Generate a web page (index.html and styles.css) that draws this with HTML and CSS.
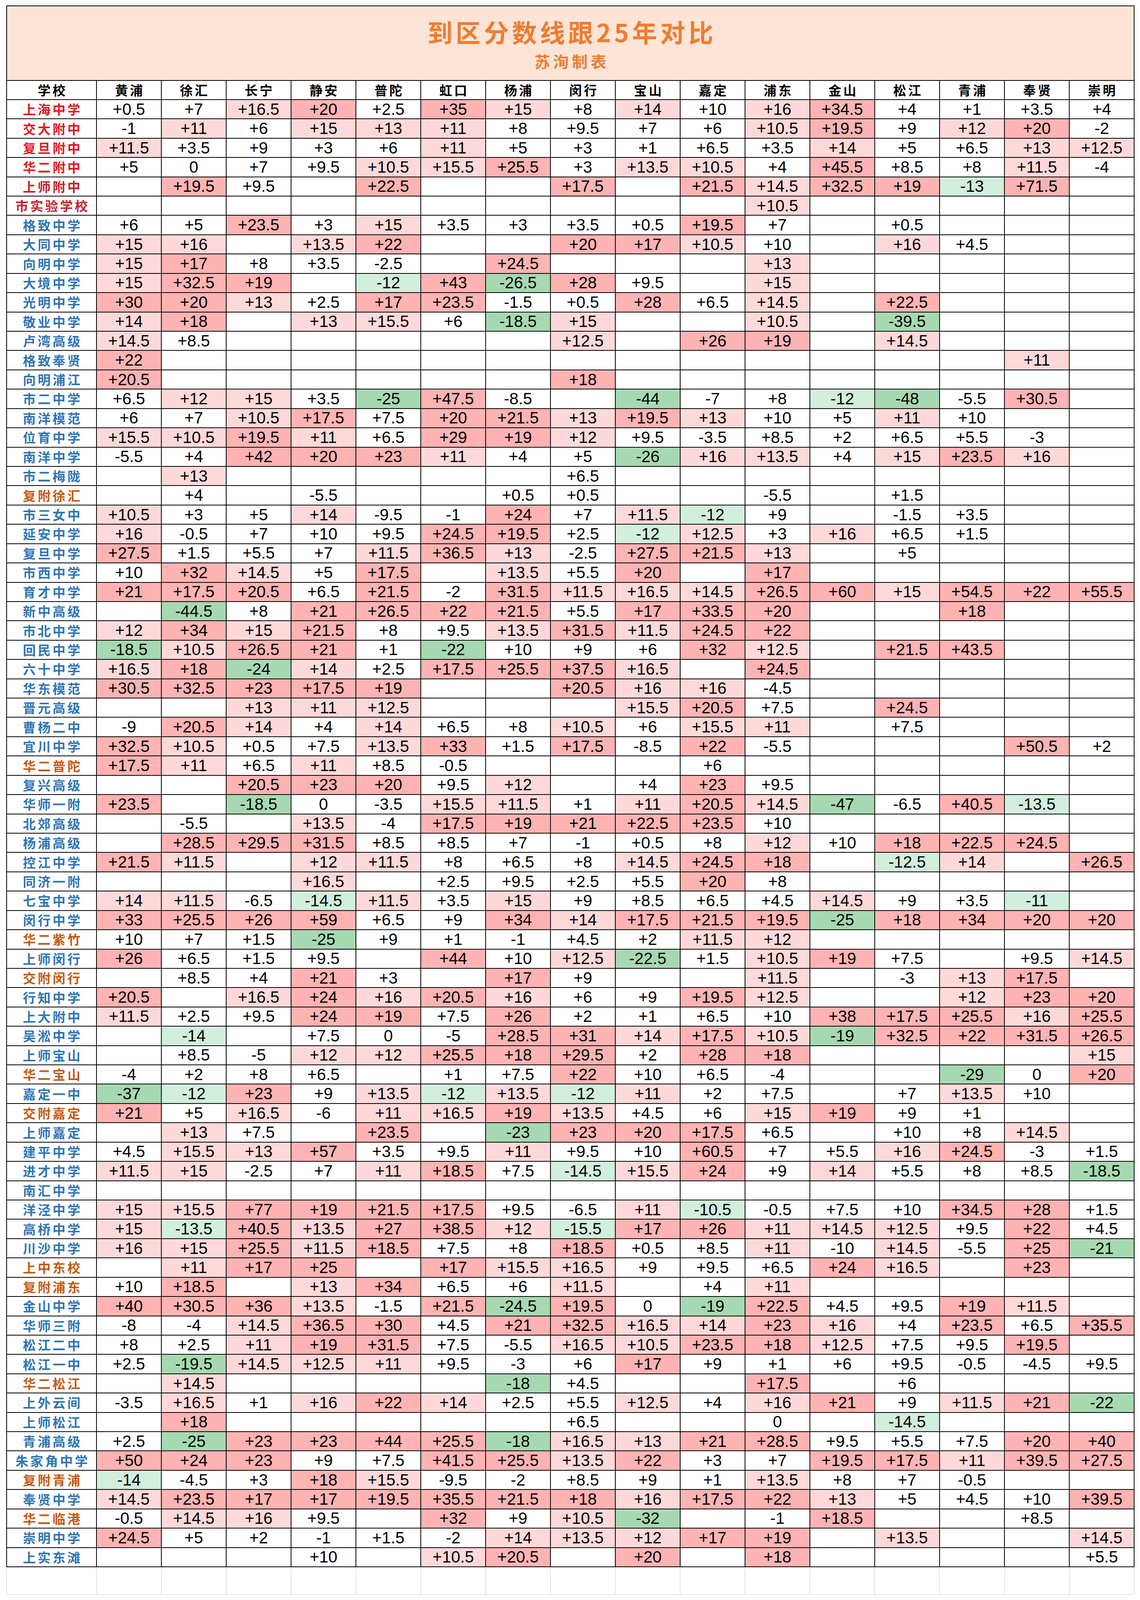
FILE: index.html
```html
<!DOCTYPE html>
<html lang="zh-CN">
<head>
<meta charset="utf-8">
<title>到区分数线跟25年对比</title>
<link rel="stylesheet" href="styles.css">
</head>
<body>
<div class="page">
  <table class="sheet">
    <colgroup>
      <col class="col-name">
      <col class="col-dist"><col class="col-dist"><col class="col-dist"><col class="col-dist">
      <col class="col-dist"><col class="col-dist"><col class="col-dist"><col class="col-dist">
      <col class="col-dist"><col class="col-dist"><col class="col-dist"><col class="col-dist">
      <col class="col-dist"><col class="col-dist"><col class="col-dist"><col class="col-dist">
    </colgroup>
    <thead>
      <tr class="title-row">
        <th class="title-cell" colspan="17">
          <div class="title">到区分数线跟25年对比</div>
          <div class="subtitle">苏洵制表</div>
        </th>
      </tr>
      <tr class="head-row">
        <th>学校</th><th>黄浦</th><th>徐汇</th><th>长宁</th><th>静安</th><th>普陀</th><th>虹口</th><th>杨浦</th><th>闵行</th><th>宝山</th><th>嘉定</th><th>浦东</th><th>金山</th><th>松江</th><th>青浦</th><th>奉贤</th><th>崇明</th>
      </tr>
    </thead>
    <tbody id="rows"></tbody>
    <tfoot>
      <tr class="blank-row">
        <td></td><td></td><td></td><td></td><td></td><td></td><td></td><td></td><td></td><td></td><td></td><td></td><td></td><td></td><td></td><td></td><td></td>
      </tr>
    </tfoot>
  </table>
</div>
<script src="script.js"></script>
</body>
</html>
```

FILE: styles.css
```css
html, body {
  margin: 0;
  padding: 0;
  background: #ffffff;
}

body {
  font-family: "Noto Sans CJK SC", "Noto Sans", sans-serif;
}

.page {
  padding: 0.333vh 16px 0 16px;
}

.sheet {
  border-collapse: collapse;
  table-layout: fixed;
  width: 2886px;
}

.col-name {
  width: 230px;
}

.col-dist {
  width: 166px;
}

.sheet th,
.sheet td {
  border: 2px solid #000000;
  padding: 0;
  text-align: center;
  vertical-align: middle;
  white-space: nowrap;
}

.title-row {
  height: 4.661vh;
}

.title-cell {
  background: #fce4d6;
}

.title {
  font-size: 64px;
  font-weight: 700;
  color: #ed7d31;
  line-height: 2.246vh;
  letter-spacing: 8px;
  text-indent: 8px;
}

.subtitle {
  font-size: 40px;
  font-weight: 700;
  color: #ed7d31;
  line-height: 1.465vh;
  letter-spacing: 8px;
  text-indent: 8px;
}

.head-row {
  height: 1.2068vh;
}

.head-row th {
  font-size: 33px;
  font-weight: 700;
  color: #000000;
  line-height: 1;
  letter-spacing: 5px;
  text-indent: 5px;
}

.data-row {
  height: 1.2068vh;
}

.name {
  font-size: 33px;
  font-weight: 700;
  line-height: 1;
  letter-spacing: 5px;
  text-indent: 5px;
}

.name-red { color: #e5171f; }
.name-dark { color: #c5222a; }
.name-blue { color: #2e75b6; }
.name-orange { color: #c65911; }

.num {
  font-family: "Liberation Sans", Arial, sans-serif;
  font-size: 42px;
  font-weight: 400;
  color: #000000;
  line-height: 1;
}

.p1 { background: #ffd9d9; }
.p2 { background: #ffb3b3; }
.g1 { background: #d2eedc; }
.g2 { background: #a6d9b1; }

.blank-row {
  height: 1.745vh;
}

.blank-row td {
  border: 2px solid #e3e3e3;
  border-top-style: none;
}
```

FILE: script.js
```js
var DATA = [
["上海中学","red","+0.5 +7 +16.5 +20 +2.5 +35 +15 +8 +14 +10 +16 +34.5 +4 +1 +3.5 +4"],
["交大附中","red","-1 +11 +6 +15 +13 +11 +8 +9.5 +7 +6 +10.5 +19.5 +9 +12 +20 -2"],
["复旦附中","red","+11.5 +3.5 +9 +3 +6 +11 +5 +3 +1 +6.5 +3.5 +14 +5 +6.5 +13 +12.5"],
["华二附中","red","+5 0 +7 +9.5 +10.5 +15.5 +25.5 +3 +13.5 +10.5 +4 +45.5 +8.5 +8 +11.5 -4"],
["上师附中","dark","_ +19.5 +9.5 _ +22.5 _ _ +17.5 _ +21.5 +14.5 +32.5 +19 -13 +71.5 _"],
["市实验学校","dark","_ _ _ _ _ _ _ _ _ _ +10.5 _ _ _ _ _"],
["格致中学","blue","+6 +5 +23.5 +3 +15 +3.5 +3 +3.5 +0.5 +19.5 +7 _ +0.5 _ _ _"],
["大同中学","blue","+15 +16 _ +13.5 +22 _ _ +20 +17 +10.5 +10 _ +16 +4.5 _ _"],
["向明中学","blue","+15 +17 +8 +3.5 -2.5 _ +24.5 _ _ _ +13 _ _ _ _ _"],
["大境中学","blue","+15 +32.5 +19 _ -12 +43 -26.5 +28 +9.5 _ +15 _ _ _ _ _"],
["光明中学","blue","+30 +20 +13 +2.5 +17 +23.5 -1.5 +0.5 +28 +6.5 +14.5 _ +22.5 _ _ _"],
["敬业中学","blue","+14 +18 _ +13 +15.5 +6 -18.5 +15 _ _ +10.5 _ -39.5 _ _ _"],
["卢湾高级","blue","+14.5 +8.5 _ _ _ _ _ +12.5 _ +26 +19 _ +14.5 _ _ _"],
["格致奉贤","blue","+22 _ _ _ _ _ _ _ _ _ _ _ _ _ +11 _"],
["向明浦江","blue","+20.5 _ _ _ _ _ _ +18 _ _ _ _ _ _ _ _"],
["市二中学","blue","+6.5 +12 +15 +3.5 -25 +47.5 -8.5 _ -44 -7 +8 -12 -48 -5.5 +30.5 _"],
["南洋模范","blue","+6 +7 +10.5 +17.5 +7.5 +20 +21.5 +13 +19.5 +13 +10 +5 +11 +10 _ _"],
["位育中学","blue","+15.5 +10.5 +19.5 +11 +6.5 +29 +19 +12 +9.5 -3.5 +8.5 +2 +6.5 +5.5 -3 _"],
["南洋中学","blue","-5.5 +4 +42 +20 +23 +11 +4 +5 -26 +16 +13.5 +4 +15 +23.5 +16 _"],
["市二梅陇","blue","_ +13 _ _ _ _ _ +6.5 _ _ _ _ _ _ _ _"],
["复附徐汇","orange","_ +4 _ -5.5 _ _ +0.5 +0.5 _ _ -5.5 _ +1.5 _ _ _"],
["市三女中","blue","+10.5 +3 +5 +14 -9.5 -1 +24 +7 +11.5 -12 +9 _ -1.5 +3.5 _ _"],
["延安中学","blue","+16 -0.5 +7 +10 +9.5 +24.5 +19.5 +2.5 -12 +12.5 +3 +16 +6.5 +1.5 _ _"],
["复旦中学","blue","+27.5 +1.5 +5.5 +7 +11.5 +36.5 +13 -2.5 +27.5 +21.5 +13 _ +5 _ _ _"],
["市西中学","blue","+10 +32 +14.5 +5 +17.5 _ +13.5 +5.5 +20 _ +17 _ _ _ _ _"],
["育才中学","blue","+21 +17.5 +20.5 +6.5 +21.5 -2 +31.5 +11.5 +16.5 +14.5 +26.5 +60 +15 +54.5 +22 +55.5"],
["新中高级","blue","_ -44.5 +8 +21 +26.5 +22 +21.5 +5.5 +17 +33.5 +20 _ _ +18 _ _"],
["市北中学","blue","+12 +34 +15 +21.5 +8 +9.5 +13.5 +31.5 +11.5 +24.5 +22 _ _ _ _ _"],
["回民中学","blue","-18.5 +10.5 +26.5 +21 +1 -22 +10 +9 +6 +32 +12.5 _ +21.5 +43.5 _ _"],
["六十中学","blue","+16.5 +18 -24 +14 +2.5 +17.5 +25.5 +37.5 +16.5 _ +24.5 _ _ _ _ _"],
["华东模范","blue","+30.5 +32.5 +23 +17.5 +19 _ _ +20.5 +16 +16 -4.5 _ _ _ _ _"],
["晋元高级","blue","_ _ +13 +11 +12.5 _ _ _ +15.5 +20.5 +7.5 _ +24.5 _ _ _"],
["曹杨二中","blue","-9 +20.5 +14 +4 +14 +6.5 +8 +10.5 +6 +15.5 +11 _ +7.5 _ _ _"],
["宜川中学","blue","+32.5 +10.5 +0.5 +7.5 +13.5 +33 +1.5 +17.5 -8.5 +22 -5.5 _ _ _ +50.5 +2"],
["华二普陀","orange","+17.5 +11 +6.5 +11 +8.5 -0.5 _ _ _ +6 _ _ _ _ _ _"],
["复兴高级","blue","_ _ +20.5 +23 +20 +9.5 +12 _ +4 +23 +9.5 _ _ _ _ _"],
["华师一附","blue","+23.5 _ -18.5 0 -3.5 +15.5 +11.5 +1 +11 +20.5 +14.5 -47 -6.5 +40.5 -13.5 _"],
["北郊高级","blue","_ -5.5 _ +13.5 -4 +17.5 +19 +21 +22.5 +23.5 +10 _ _ _ _ _"],
["杨浦高级","blue","_ +28.5 +29.5 +31.5 +8.5 +8.5 +7 -1 +0.5 +8 +12 +10 +18 +22.5 +24.5 _"],
["控江中学","blue","+21.5 +11.5 _ +12 +11.5 +8 +6.5 +8 +14.5 +24.5 +18 _ -12.5 +14 _ +26.5"],
["同济一附","blue","_ _ _ +16.5 _ +2.5 +9.5 +2.5 +5.5 +20 +8 _ _ _ _ _"],
["七宝中学","blue","+14 +11.5 -6.5 -14.5 +11.5 +3.5 +15 +9 +8.5 +6.5 +4.5 +14.5 +9 +3.5 -11 _"],
["闵行中学","blue","+33 +25.5 +26 +59 +6.5 +9 +34 +14 +17.5 +21.5 +19.5 -25 +18 +34 +20 +20"],
["华二紫竹","orange","+10 +7 +1.5 -25 +9 +1 -1 +4.5 +2 +11.5 +12 _ _ _ _ _"],
["上师闵行","blue","+26 +6.5 +1.5 +9.5 _ +44 +10 +12.5 -22.5 +1.5 +10.5 +19 +7.5 _ +9.5 +14.5"],
["交附闵行","orange","_ +8.5 +4 +21 +3 _ +17 +9 _ _ +11.5 _ -3 +13 +17.5 _"],
["行知中学","blue","+20.5 _ +16.5 +24 +16 +20.5 +16 +6 +9 +19.5 +12.5 _ _ +12 +23 +20"],
["上大附中","blue","+11.5 +2.5 +9.5 +24 +19 +7.5 +26 +2 +1 +6.5 +10 +38 +17.5 +25.5 +16 +25.5"],
["吴淞中学","blue","_ -14 _ +7.5 0 -5 +28.5 +31 +14 +17.5 +10.5 -19 +32.5 +22 +31.5 +26.5"],
["上师宝山","blue","_ +8.5 -5 +12 +12 +25.5 +18 +29.5 +2 +28 +18 _ _ _ _ +15"],
["华二宝山","orange","-4 +2 +8 +6.5 _ +1 +7.5 +22 +10 +6.5 -4 _ _ -29 0 +20"],
["嘉定一中","blue","-37 -12 +23 +9 +13.5 -12 +13.5 -12 +11 +2 +7.5 _ +7 +13.5 +10 _"],
["交附嘉定","orange","+21 +5 +16.5 -6 +11 +16.5 +19 +13.5 +4.5 +6 +15 +19 +9 +1 _ _"],
["上师嘉定","blue","_ +13 +7.5 _ +23.5 _ -23 +23 +20 +17.5 +6.5 _ +10 +8 +14.5 _"],
["建平中学","blue","+4.5 +15.5 +13 +57 +3.5 +9.5 +11 +9.5 +10 +60.5 +7 +5.5 +16 +24.5 -3 +1.5"],
["进才中学","blue","+11.5 +15 -2.5 +7 +11 +18.5 +7.5 -14.5 +15.5 +24 +9 +14 +5.5 +8 +8.5 -18.5"],
["南汇中学","blue","_ _ _ _ _ _ _ _ _ _ _ _ _ _ _ _"],
["洋泾中学","blue","+15 +15.5 +77 +19 +21.5 +17.5 +9.5 -6.5 +11 -10.5 -0.5 +7.5 +10 +34.5 +28 +1.5"],
["高桥中学","blue","+15 -13.5 +40.5 +13.5 +27 +38.5 +12 -15.5 +17 +26 +11 +14.5 +12.5 +9.5 +22 +4.5"],
["川沙中学","blue","+16 +15 +25.5 +11.5 +18.5 +7.5 +8 +18.5 +0.5 +8.5 +11 -10 +14.5 -5.5 +25 -21"],
["上中东校","orange","_ +11 +17 +25 _ +17 +15.5 +16.5 +9 +9.5 +6.5 +24 +16.5 _ +23 _"],
["复附浦东","orange","+10 +18.5 _ +13 +34 +6.5 +6 +11.5 _ +4 +11 _ _ _ _ _"],
["金山中学","blue","+40 +30.5 +36 +13.5 -1.5 +21.5 -24.5 +19.5 0 -19 +22.5 +4.5 +9.5 +19 +11.5 _"],
["华师三附","blue","-8 -4 +14.5 +36.5 +30 +4.5 +21 +32.5 +16.5 +14 +23 +16 +4 +23.5 +6.5 +35.5"],
["松江二中","blue","+8 +2.5 +11 +19 +31.5 +7.5 -5.5 +16.5 +10.5 +23.5 +18 +12.5 +7.5 +9.5 +19.5 _"],
["松江一中","blue","+2.5 -19.5 +14.5 +12.5 +11 +9.5 -3 +6 +17 +9 +1 +6 +9.5 -0.5 -4.5 +9.5"],
["华二松江","orange","_ +14.5 _ _ _ _ -18 +4.5 _ _ +17.5 _ +6 _ _ _"],
["上外云间","blue","-3.5 +16.5 +1 +16 +22 +14 +2.5 +5.5 +12.5 +4 +16 +21 +9 +11.5 +21 -22"],
["上师松江","blue","_ +18 _ _ _ _ _ +6.5 _ _ 0 _ -14.5 _ _ _"],
["青浦高级","blue","+2.5 -25 +23 +23 +44 +25.5 -18 +16.5 +13 +21 +28.5 +9.5 +5.5 +7.5 +20 +40"],
["朱家角中学","blue","+50 +24 +23 +9 +7.5 +41.5 +25.5 +13.5 +22 +3 +7 +19.5 +17.5 +11 +39.5 +27.5"],
["复附青浦","orange","-14 -4.5 +3 +18 +15.5 -9.5 -2 +8.5 +9 +1 +13.5 +8 +7 -0.5 _ _"],
["奉贤中学","blue","+14.5 +23.5 +17 +17 +19.5 +35.5 +21.5 +18 +16 +17.5 +22 +13 +5 +4.5 +10 +39.5"],
["华二临港","orange","-0.5 +14.5 +16 +9.5 _ +32 +9 +10.5 -32 _ -1 +18.5 _ _ +8.5 _"],
["崇明中学","blue","+24.5 +5 +2 -1 +1.5 -2 +14 +13.5 +12 +17 +19 _ +13.5 _ _ +14.5"],
["上实东滩","blue","_ _ _ +10 _ +10.5 +20.5 _ +20 _ +18 _ _ _ _ +5.5"]
];

function shadeClass(text) {
  if (text === "") return "";
  var v = parseFloat(text);
  if (v >= 17) return "p2";
  if (v > 10) return "p1";
  if (v <= -17) return "g2";
  if (v < -10) return "g1";
  return "";
}

(function build() {
  var body = document.getElementById("rows");
  DATA.forEach(function (row) {
    var tr = document.createElement("tr");
    tr.className = "data-row";
    var nameCell = document.createElement("td");
    nameCell.className = "name name-" + row[1];
    nameCell.textContent = row[0];
    tr.appendChild(nameCell);
    var vals = row[2].split(" ");
    for (var i = 0; i < 16; i++) {
      var t = vals[i] === undefined || vals[i] === "_" ? "" : vals[i];
      var td = document.createElement("td");
      var cls = shadeClass(t);
      td.className = "num" + (cls ? " " + cls : "");
      td.textContent = t;
      tr.appendChild(td);
    }
    body.appendChild(tr);
  });
})();
```
